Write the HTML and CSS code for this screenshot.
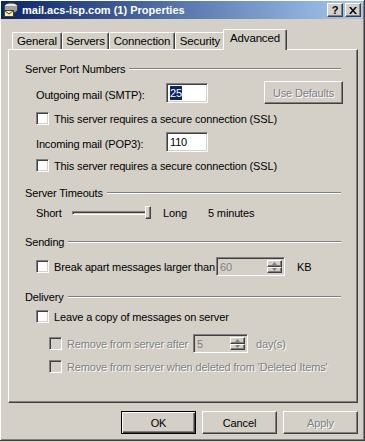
FILE: index.html
```html
<!DOCTYPE html>
<html>
<head>
<meta charset="utf-8">
<link rel="stylesheet" href="styles.css">
</head>
<body>
<div class="window">
  <div class="titlebar">
    <svg class="appicon" width="16" height="16" viewBox="0 0 16 16">
      <ellipse cx="8" cy="4" rx="6.5" ry="3" fill="#e8e8e8" stroke="#404040" stroke-width="1"/>
      <path d="M1.5 4 v4 a6.5 3 0 0 0 13 0 v-4" fill="#a0a0a0" stroke="#404040" stroke-width="1"/>
      <rect x="1.5" y="8.5" width="9" height="6" fill="#ffef9a" stroke="#404040" stroke-width="1"/>
      <path d="M1.5 8.5 L6 12 L10.5 8.5" fill="none" stroke="#404040" stroke-width="1"/>
    </svg>
    <span class="title">mail.acs-isp.com (1) Properties</span>
    <div class="capbtns">
      <span class="capbtn">?</span>
      <span class="capbtn"><svg width="8" height="7" viewBox="0 0 8 7"><path d="M0 0h2l2 2.5L6 0h2L5 3.5 8 7H6L4 4.5 2 7H0l3-3.5z" fill="#000"/></svg></span>
    </div>
  </div>

  <div class="tabs">
    <div class="tab w-general">General</div>
    <div class="tab w-servers">Servers</div>
    <div class="tab w-connection">Connection</div>
    <div class="tab w-security">Security</div>
    <div class="tab active w-advanced">Advanced</div>
  </div>

  <div class="panel">
    <div class="group-head"><span>Server Port Numbers</span><i class="rule"></i></div>

    <div class="row port-row">
      <span class="lbl">Outgoing mail (SMTP):</span>
      <span class="field port"><span class="sel">25</span></span>
      <span class="btn disabled usedef">Use Defaults</span>
    </div>
    <div class="row check-row r-ssl1"><span class="cb"></span><span>This server requires a secure connection (SSL)</span></div>
    <div class="row port-row r-pop">
      <span class="lbl">Incoming mail (POP3):</span>
      <span class="field port">110</span>
    </div>
    <div class="row check-row r-ssl2"><span class="cb"></span><span>This server requires a secure connection (SSL)</span></div>

    <div class="group-head g-timeouts"><span>Server Timeouts</span><i class="rule"></i></div>
    <div class="row slider-row">
      <span class="s-short">Short</span>
      <span class="track"><span class="thumb"></span></span>
      <span class="s-long">Long</span>
      <span>5 minutes</span>
    </div>

    <div class="group-head g-sending"><span>Sending</span><i class="rule"></i></div>
    <div class="row check-row r-break">
      <span class="cb"></span><span class="break-lbl">Break apart messages larger than</span>
      <span class="spin spin-kb"><span class="spin-val">60</span><span class="spin-btns"><span class="sb"><svg width="5" height="3" viewBox="0 0 5 3"><path d="M2.5 0L5 3H0z" fill="#808080"/></svg></span><span class="sb"><svg width="5" height="3" viewBox="0 0 5 3"><path d="M0 0h5L2.5 3z" fill="#808080"/></svg></span></span></span>
      <span class="kb">KB</span>
    </div>

    <div class="group-head g-delivery"><span>Delivery</span><i class="rule"></i></div>
    <div class="row check-row r-leave"><span class="cb"></span><span>Leave a copy of messages on server</span></div>
    <div class="row check-row sub r-after">
      <span class="cb dis"></span><span class="dtext after-lbl">Remove from server after</span>
      <span class="spin spin-days"><span class="spin-val">5</span><span class="spin-btns"><span class="sb"><svg width="5" height="3" viewBox="0 0 5 3"><path d="M2.5 0L5 3H0z" fill="#808080"/></svg></span><span class="sb"><svg width="5" height="3" viewBox="0 0 5 3"><path d="M0 0h5L2.5 3z" fill="#808080"/></svg></span></span></span>
      <span class="dtext days">day(s)</span>
    </div>
    <div class="row check-row sub r-deleted"><span class="cb dis"></span><span class="dtext">Remove from server when deleted from 'Deleted Items'</span></div>
  </div>

  <div class="buttons">
    <span class="btn default">OK</span>
    <span class="btn">Cancel</span>
    <span class="btn disabled">Apply</span>
  </div>
</div>
</body>
</html>
```

FILE: styles.css
```css
* { box-sizing: border-box; }
html, body { margin: 0; padding: 0; }
body {
  width: 365px; height: 442px; overflow: hidden;
  background: #d4d0c8;
  font-family: "Liberation Sans", Arial, sans-serif;
  font-size: 11px; color: #000;
  letter-spacing: -0.15px;
  white-space: nowrap;
}
.window {
  width: 365px; height: 441px;
  background: #d4d0c8;
  padding: 1px;
  border-right: 1px solid #404040;
  border-bottom: 1px solid #404040;
  box-shadow: inset 1px 1px #fff, inset -1px -1px #808080;
}
.titlebar {
  height: 18px;
  background: linear-gradient(to right, #0a246a, #a6caf0);
  display: flex; align-items: center;
  padding-left: 2px;
}
.appicon { flex: none; }
.title {
  color: #fff; font-weight: bold; font-size: 11px;
  margin-left: 3px; letter-spacing: 0;
}
.capbtns { margin-left: auto; display: flex; gap: 2px; margin-right: 2px; }
.capbtn {
  width: 16px; height: 14px;
  background: #d4d0c8;
  border: 1px solid; border-color: #fff #404040 #404040 #fff;
  box-shadow: inset -1px -1px #808080;
  display: flex; align-items: center; justify-content: center;
  font-weight: bold; font-size: 11px; line-height: 1;
}
.tabs {
  margin: 10px 0 0 11px;
  height: 20px;
  display: flex; align-items: flex-end;
  position: relative; z-index: 1;
}
.tab {
  height: 17px;
  border-left: 1px solid #fff; border-top: 1px solid #fff;
  border-right: 1px solid #404040;
  box-shadow: inset -1px 0 #808080;
  border-radius: 2px 2px 0 0;
  text-align: center; line-height: 16px;
  font-size: 11.5px;
}
.tab.active {
  height: 21px; margin: 0 -1px -1px -2px;
  background: #d4d0c8;
  line-height: 17px;
}
.w-general { width: 50px; }
.w-servers { width: 47px; }
.w-connection { width: 66px; }
.w-security { width: 50px; }
.w-advanced { width: 64px; }
.panel {
  margin-left: 7px;
  width: 350px; height: 354px;
  border: 1px solid; border-color: #fff #404040 #404040 #fff;
  box-shadow: inset -1px -1px #808080;
  padding: 12px 16px 0 16px;
}
.group-head {
  display: flex; align-items: center; height: 14px; line-height: 14px;
}
.rule {
  flex: 1; margin-left: 4px; height: 2px;
  border-top: 1px solid #808080; border-bottom: 1px solid #fff;
}
.row { margin-left: 11px; display: flex; align-items: center; }
.port-row { margin-top: 7px; height: 20px; }
.lbl { width: 130px; padding-top: 3px; }
.field {
  height: 20px; background: #fff;
  border: 1px solid; border-color: #808080 #fff #fff #808080;
  box-shadow: inset 1px 1px #404040, inset -1px -1px #d4d0c8;
  padding: 0 3px; line-height: 18px;
}
.port { width: 42px; }
.sel { background: #0a246a; color: #fff; padding: 1px 0; }
.btn {
  display: flex; align-items: center; justify-content: center;
  height: 23px;
  border: 1px solid; border-color: #fff #404040 #404040 #fff;
  box-shadow: inset -1px -1px #808080;
  background: #d4d0c8;
}
.btn.disabled { color: #808080; text-shadow: 1px 1px #fff; }
.usedef { width: 79px; margin-left: auto; margin-right: -2px; margin-top: -2px; margin-bottom: -1px; }
.check-row { height: 13px; gap: 5px; }
.cb {
  width: 13px; height: 13px; flex: none; background: #fff;
  border: 1px solid; border-color: #808080 #fff #fff #808080;
  box-shadow: inset 1px 1px #404040, inset -1px -1px #d4d0c8;
}
.cb.dis { background: #d4d0c8; }
.r-ssl1 { margin-top: 9px; }
.r-pop { margin-top: 7px; }
.r-ssl2 { margin-top: 7px; }
.g-timeouts { margin-top: 14px; }
.slider-row { margin-top: 6px; height: 14px; }
.s-short { width: 36px; }
.track {
  width: 78px; height: 4px; position: relative;
  border: 1px solid; border-color: #808080 #fff #fff #808080;
  box-shadow: inset 1px 1px #404040;
}
.thumb {
  position: absolute; right: -2px; top: -6px;
  width: 6px; height: 13px; background: #d4d0c8;
  border: 1px solid; border-color: #fff #404040 #404040 #fff;
  box-shadow: inset -1px -1px #808080;
}
.s-long { margin-left: 13px; width: 45px; }
.g-sending { margin-top: 15px; }
.r-break { margin-top: 8px; height: 19px; }
.break-lbl { width: 157px; }
.spin {
  display: flex; height: 19px; background: #d4d0c8;
  border: 1px solid; border-color: #808080 #fff #fff #808080;
  box-shadow: inset 1px 1px #404040, inset -1px -1px #d4d0c8;
  padding: 2px 2px 2px 2px;
}
.spin-val { flex: 1; color: #808080; padding-left: 1px; line-height: 14px; }
.spin-btns { display: flex; flex-direction: column; width: 15px; }
.sb {
  flex: 1; display: flex; align-items: center; justify-content: center;
  border: 1px solid; border-color: #fff #404040 #404040 #fff;
  box-shadow: inset -1px -1px #808080;
}
.spin-kb { width: 69px; }
.kb { margin-left: 7px; }
.g-delivery { margin-top: 14px; }
.r-leave { margin-top: 6px; }
.sub { margin-left: 24px; }
.dtext { color: #808080; text-shadow: 1px 1px #fff; }
.r-after { margin-top: 11px; height: 19px; }
.after-lbl { width: 121px; }
.spin-days { width: 55px; }
.days { margin-left: 3px; }
.r-deleted { margin-top: 7px; }
.buttons {
  margin: 8px 0 0 7px; width: 350px;
  display: flex; justify-content: flex-end; gap: 6px;
}
.buttons .btn { width: 75px; }
.btn.default {
  border: 1px solid #000;
  box-shadow: inset 1px 1px #fff, inset -1px -1px #404040, inset -2px -2px #808080;
}
```
